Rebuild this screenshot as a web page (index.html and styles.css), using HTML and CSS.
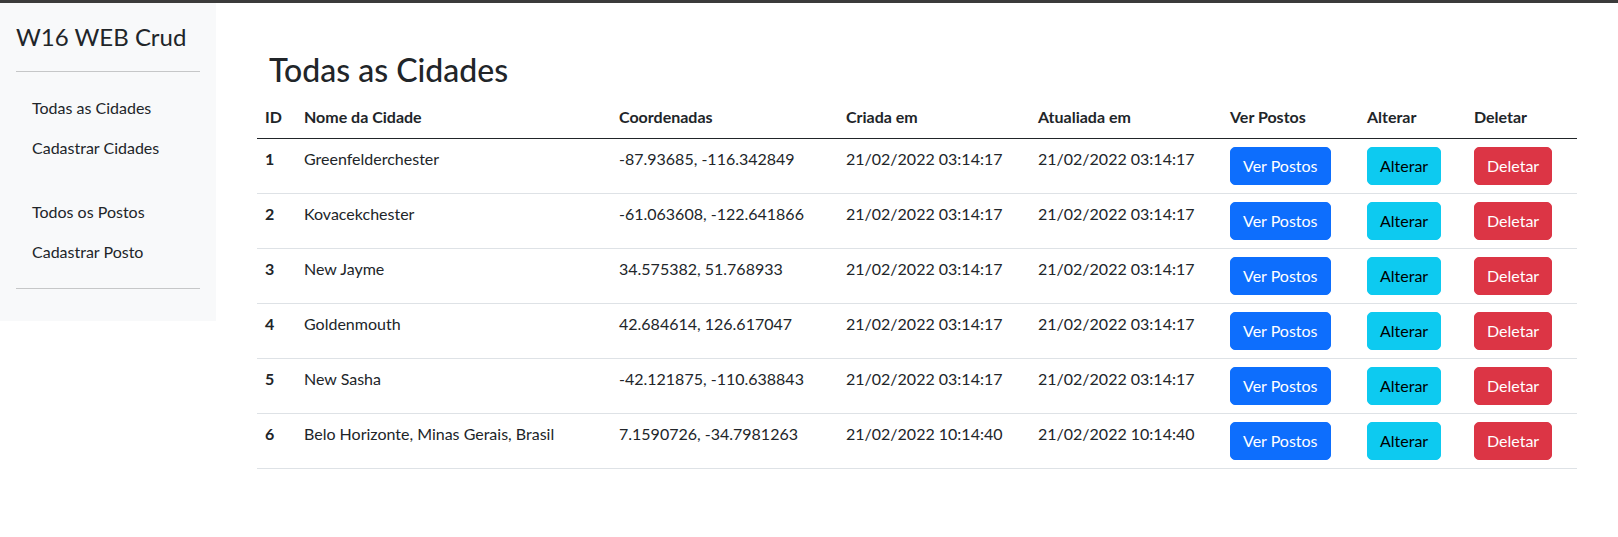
FILE: index.html
```html
<!DOCTYPE html>
<html lang="pt-BR">
<head>
<meta charset="utf-8">
<title>W16 WEB Crud</title>
<link rel="stylesheet" href="styles.css">
</head>
<body>
<div class="layout">
  <aside class="sidebar">
    <div class="brand">W16 WEB Crud</div>
    <hr class="divider">
    <ul class="nav">
      <li><a class="nav-link" href="#">Todas as Cidades</a></li>
      <li><a class="nav-link" href="#">Cadastrar Cidades</a></li>
    </ul>
    <ul class="nav nav-second">
      <li><a class="nav-link" href="#">Todos os Postos</a></li>
      <li><a class="nav-link" href="#">Cadastrar Posto</a></li>
    </ul>
    <hr class="divider">
  </aside>
  <main class="main">
    <div class="container">
      <h2 class="page-title">Todas as Cidades</h2>
      <table class="table">
        <colgroup>
          <col class="c-id"><col class="c-name"><col class="c-coord"><col class="c-date"><col class="c-date"><col class="c-ver"><col class="c-alt"><col class="c-del">
        </colgroup>
        <thead>
          <tr><th>ID</th><th>Nome da Cidade</th><th>Coordenadas</th><th>Criada em</th><th>Atualiada em</th><th>Ver Postos</th><th>Alterar</th><th>Deletar</th></tr>
        </thead>
        <tbody>
          <tr><th>1</th><td>Greenfelderchester</td><td>-87.93685, -116.342849</td><td>21/02/2022 03:14:17</td><td>21/02/2022 03:14:17</td><td><a class="btn btn-primary" href="#">Ver Postos</a></td><td><a class="btn btn-info" href="#">Alterar</a></td><td><a class="btn btn-danger" href="#">Deletar</a></td></tr>
          <tr><th>2</th><td>Kovacekchester</td><td>-61.063608, -122.641866</td><td>21/02/2022 03:14:17</td><td>21/02/2022 03:14:17</td><td><a class="btn btn-primary" href="#">Ver Postos</a></td><td><a class="btn btn-info" href="#">Alterar</a></td><td><a class="btn btn-danger" href="#">Deletar</a></td></tr>
          <tr><th>3</th><td>New Jayme</td><td>34.575382, 51.768933</td><td>21/02/2022 03:14:17</td><td>21/02/2022 03:14:17</td><td><a class="btn btn-primary" href="#">Ver Postos</a></td><td><a class="btn btn-info" href="#">Alterar</a></td><td><a class="btn btn-danger" href="#">Deletar</a></td></tr>
          <tr><th>4</th><td>Goldenmouth</td><td>42.684614, 126.617047</td><td>21/02/2022 03:14:17</td><td>21/02/2022 03:14:17</td><td><a class="btn btn-primary" href="#">Ver Postos</a></td><td><a class="btn btn-info" href="#">Alterar</a></td><td><a class="btn btn-danger" href="#">Deletar</a></td></tr>
          <tr><th>5</th><td>New Sasha</td><td>-42.121875, -110.638843</td><td>21/02/2022 03:14:17</td><td>21/02/2022 03:14:17</td><td><a class="btn btn-primary" href="#">Ver Postos</a></td><td><a class="btn btn-info" href="#">Alterar</a></td><td><a class="btn btn-danger" href="#">Deletar</a></td></tr>
          <tr><th>6</th><td>Belo Horizonte, Minas Gerais, Brasil</td><td>7.1590726, -34.7981263</td><td>21/02/2022 10:14:40</td><td>21/02/2022 10:14:40</td><td><a class="btn btn-primary" href="#">Ver Postos</a></td><td><a class="btn btn-info" href="#">Alterar</a></td><td><a class="btn btn-danger" href="#">Deletar</a></td></tr>
        </tbody>
      </table>
    </div>
  </main>
</div>
</body>
</html>
```
FILE: styles.css
```css
* { box-sizing: border-box; }
html, body { margin: 0; padding: 0; }
body {
  font-family: Lato, "Liberation Sans", sans-serif;
  font-size: 16px;
  line-height: 1.5;
  color: #212529;
  background: #fff;
  border-top: 3px solid #3b3b3b;
}
.layout { display: flex; align-items: flex-start; }
.sidebar {
  width: 216px;
  flex: 0 0 216px;
  background: #f8f9fa;
  padding: 16px;
}
.brand { font-size: 24px; line-height: 36px; }
.divider {
  border: 0;
  border-top: 1px solid #c6c7c8;
  margin: 16px 0;
  height: 0;
}
.nav { list-style: none; margin: 0; padding: 0; }
.nav-second { margin-top: 24px; }
.nav-link {
  display: block;
  padding: 8px 16px;
  color: #212529;
  text-decoration: none;
}
.main { flex: 1; padding-top: 48px; }
.container { width: 1320px; margin: 0 auto; }
.page-title {
  font-size: 32px;
  font-weight: 500;
  line-height: 38.4px;
  margin: 0 0 8px 12px;
}
.table {
  width: 100%;
  table-layout: fixed;
  border-collapse: collapse;
}
.c-id { width: 39px; }
.c-name { width: 315px; }
.c-coord { width: 227px; }
.c-date { width: 192px; }
.c-ver { width: 137px; }
.c-alt { width: 107px; }
.c-del { width: 111px; }
.table th, .table td {
  text-align: left;
  vertical-align: top;
  padding: 8px;
  border-bottom: 1px solid #dee2e6;
  white-space: nowrap;
}
.table th { font-weight: 700; }
.table thead th { border-bottom: 1px solid #212529; padding-bottom: 9px; }
.btn {
  display: inline-block;
  padding: 6px 12px;
  font-size: 16px;
  line-height: 24px;
  border: 1px solid transparent;
  border-radius: 5px;
  text-decoration: none;
}
.btn-primary { background: #0d6efd; border-color: #0d6efd; color: #fff; }
.btn-info { background: #0dcaf0; border-color: #0dcaf0; color: #000; }
.btn-danger { background: #dc3545; border-color: #dc3545; color: #fff; }
```
